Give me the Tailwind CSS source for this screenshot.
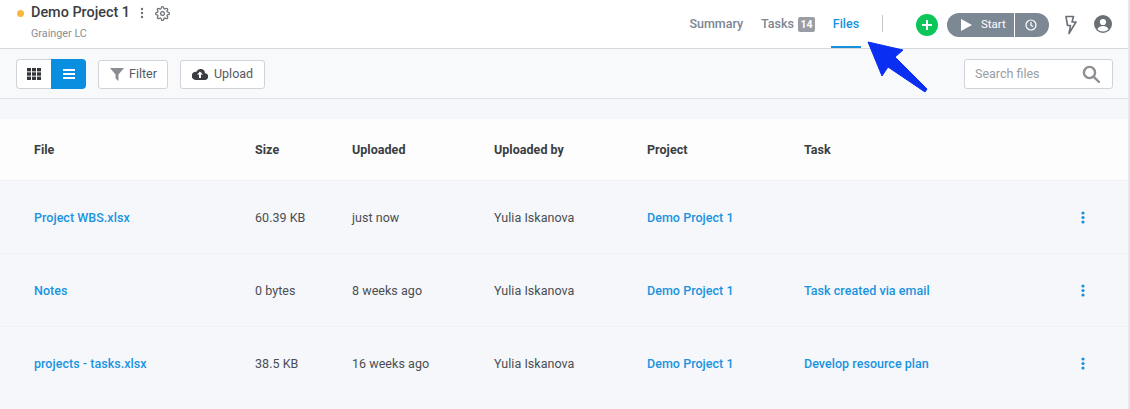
<!DOCTYPE html>
<html>
<head>
<meta charset="utf-8">
<script src="https://cdn.jsdelivr.net/npm/@tailwindcss/browser@4"></script>
</head>
<body class="font-['Roboto',sans-serif] bg-[#f5f7fa] overflow-hidden">
<div class="relative w-[1130px] h-[409px] overflow-hidden bg-[#f5f7fa] border-r-2 border-[#e6e6e8]">
  <header class="h-[49px] bg-white border-b border-[#d5d8de] flex justify-between pl-[17px] pr-[16px]">
    <div class="flex items-start">
      <span class="w-[7px] h-[7px] rounded-full bg-[#f9b83b] mt-[10px] mr-[7px]"></span>
      <div>
        <div class="flex items-center h-[26px]">
          <span class="text-[14.4px] font-medium text-[#3a3d42]">Demo Project 1</span>
          <svg class="ml-[10px]" width="4" height="12" viewBox="0 0 4 12" fill="#6b7077"><circle cx="2" cy="2" r="1.2"/><circle cx="2" cy="6" r="1.2"/><circle cx="2" cy="10" r="1.2"/></svg>
          <svg class="ml-[11px]" width="15" height="15" viewBox="0 0 24 24" fill="none" stroke="#6b7077" stroke-width="2"><circle cx="12" cy="12" r="3"/><path d="M19.4 15a1.65 1.65 0 0 0 .33 1.82l.06.06a2 2 0 1 1-2.83 2.83l-.06-.06a1.65 1.65 0 0 0-2.82 1.17V21a2 2 0 1 1-4 0v-.09A1.65 1.65 0 0 0 7.2 19.7l-.06.06a2 2 0 1 1-2.83-2.83l.06-.06a1.65 1.65 0 0 0-1.17-2.82H3a2 2 0 1 1 0-4h.09A1.65 1.65 0 0 0 4.3 7.2l-.06-.06a2 2 0 1 1 2.83-2.83l.06.06a1.65 1.65 0 0 0 2.82-1.17V3a2 2 0 1 1 4 0v.09a1.65 1.65 0 0 0 2.82 1.17l.06-.06a2 2 0 1 1 2.83 2.83l-.06.06a1.65 1.65 0 0 0 1.17 2.82H21a2 2 0 1 1 0 4h-.09A1.65 1.65 0 0 0 19.4 15z"/></svg>
        </div>
        <div class="text-[10.8px] leading-[14px] mt-[1px] text-[#8a8e94]">Grainger LC</div>
      </div>
    </div>
    <div class="flex items-start">
      <nav class="flex text-[12.5px] font-medium text-[#7c8591] h-[48px]">
        <span class="mt-[16px] leading-[16px]">Summary</span>
        <span class="ml-[18px] mt-[16px] leading-[16px] flex">Tasks<span class="ml-[4px] mt-[1px] w-[17px] h-[15px] rounded-[2px] bg-[#9a9da3] text-white text-[10.5px] font-bold leading-[15px] text-center">14</span></span>
        <span class="ml-[16px] w-[30px] h-[48px] border-b-[2px] border-[#1a8fdc] text-[#1a93e0] pt-[16px] leading-[16px] text-center">Files</span>
      </nav>
      <div class="w-px h-[17px] bg-[#c4c7cc] ml-[21px] mt-[15px]"></div>
      <div class="ml-[33px] mt-[14px] w-[22px] h-[22px] rounded-full bg-[#0cc65a] flex items-center justify-center">
        <svg width="10" height="10" viewBox="0 0 10 10" stroke="white" stroke-width="2"><path d="M5 0v10M0 5h10"/></svg>
      </div>
      <div class="ml-[9px] mt-[13px] flex h-[24px] text-white">
        <div class="w-[67px] rounded-l-full bg-[#7d8895] flex items-center pl-[14px] text-[11.5px]">
          <svg width="11" height="12" viewBox="0 0 11 12" fill="white"><path d="M0 0l11 6-11 6z"/></svg>
          <span class="ml-[9px]">Start</span>
        </div>
        <div class="ml-px w-[34px] rounded-r-full bg-[#7d8895] flex items-center pl-[10px]">
          <svg width="12" height="12" viewBox="0 0 12 12" fill="none" stroke="white" stroke-width="1.2"><circle cx="6" cy="6" r="5"/><path d="M6 3v3.3l2 1.2"/></svg>
        </div>
      </div>
      <svg class="ml-[15px] mt-[15px]" width="13" height="20" viewBox="0 0 13 20" fill="none" stroke="#6b7077" stroke-width="1.6" stroke-linejoin="round"><path d="M2 1.5h7.5L8 7h4L5 18.5l1.5-8H3.5z"/></svg>
      <svg class="ml-[17px] mt-[15px]" width="18" height="18" viewBox="0 0 18 18"><circle cx="9" cy="9" r="9" fill="#6b7077"/><circle cx="9" cy="7" r="3.1" fill="white"/><path d="M3.4 14.2c1-2.4 3.2-3.2 5.6-3.2s4.6.8 5.6 3.2A7.5 7.5 0 0 1 9 16.6a7.5 7.5 0 0 1-5.6-2.4z" fill="white"/></svg>
    </div>
  </header>

  <div class="h-[50px] bg-[#f8f9fb] border-b border-[#dcdfe4] pl-[16px] pr-[15px] flex items-center justify-between">
    <div class="flex items-center">
      <div class="flex h-[30px] w-[70px]">
        <div class="w-[35px] bg-white border border-[#d0d3d8] border-r-0 rounded-l-[4px] flex items-center justify-center">
          <svg width="14" height="12" viewBox="0 0 14 12" fill="#33363b"><rect width="4" height="3.4"/><rect x="5" width="4" height="3.4"/><rect x="10" width="4" height="3.4"/><rect y="4.3" width="4" height="3.4"/><rect x="5" y="4.3" width="4" height="3.4"/><rect x="10" y="4.3" width="4" height="3.4"/><rect y="8.6" width="4" height="3.4"/><rect x="5" y="8.6" width="4" height="3.4"/><rect x="10" y="8.6" width="4" height="3.4"/></svg>
        </div>
        <div class="w-[35px] bg-[#0a8fe0] rounded-r-[4px] flex items-center justify-center">
          <svg width="12" height="10" viewBox="0 0 12 10" fill="white"><rect width="12" height="2"/><rect y="4" width="12" height="2"/><rect y="8" width="12" height="2"/></svg>
        </div>
      </div>
      <div class="ml-[12px] w-[70px] h-[29px] mt-[1px] bg-white border border-[#d0d3d8] rounded-[3px] flex items-center pl-[11px] text-[12.5px] text-[#55595f]">
        <svg width="14" height="14" viewBox="0 0 14 14" fill="#8a8d92"><path d="M0 1h14L8.5 7.5V14L5.5 11.5v-4z"/></svg>
        <span class="ml-[5px]">Filter</span>
      </div>
      <div class="ml-[12px] w-[85px] h-[29px] mt-[1px] bg-white border border-[#d0d3d8] rounded-[3px] flex items-center pl-[11px] text-[12.5px] text-[#55595f]">
        <svg width="16" height="12" viewBox="0 0 16 12"><path d="M13 5.2A4.5 4.5 0 0 0 4.4 3.7 3.5 3.5 0 0 0 3.5 12H12.5a3.4 3.4 0 0 0 .5-6.8z" fill="#3a3d42"/><path d="M8 3.4L5 6.6h2V10h2V6.6h2z" fill="white"/></svg>
        <span class="ml-[6px]">Upload</span>
      </div>
    </div>
    <div class="w-[149px] h-[30px] bg-white border border-[#d0d3d8] rounded-[3px] flex items-center justify-between pl-[10px] pr-[12px]">
      <span class="text-[12.5px] text-[#9a9da3] pt-[2px]">Search files</span>
      <svg width="18" height="18" viewBox="0 0 18 18" fill="none" stroke="#8c8f94" stroke-width="2.4"><circle cx="7.5" cy="7.5" r="5.6"/><path d="M11.8 11.8L17 17" stroke-linecap="round"/></svg>
    </div>
  </div>

  <div class="mt-[20px] text-[12.5px] tracking-[0.04px]">
    <div class="h-[62px] pt-[2px] bg-[#fdfdfd] border-b border-[#f5f1f3] grid grid-cols-[221px_97px_142px_153px_157px_1fr] pl-[34px] items-center font-bold text-[#3a3d42]">
      <span>File</span><span>Size</span><span>Uploaded</span><span>Uploaded by</span><span>Project</span><span>Task</span>
    </div>
    <div class="h-[73px] pt-[2px] border-b border-[#f1f2f5] grid grid-cols-[221px_97px_142px_153px_157px_1fr] pl-[34px] pr-[43px] items-center text-[#4a4d52]">
      <span class="font-medium text-[#1a93e0]">Project WBS.xlsx</span><span>60.39 KB</span><span>just now</span><span>Yulia Iskanova</span><span class="font-medium text-[#1a93e0]">Demo Project 1</span>
      <div class="flex justify-end mb-[2px]"><svg width="4" height="13" viewBox="0 0 4 13" fill="#1a8fdc"><circle cx="2" cy="2" r="1.6"/><circle cx="2" cy="6.5" r="1.6"/><circle cx="2" cy="11" r="1.6"/></svg></div>
    </div>
    <div class="h-[73px] pt-[2px] border-b border-[#f1f2f5] grid grid-cols-[221px_97px_142px_153px_157px_1fr] pl-[34px] pr-[43px] items-center text-[#4a4d52]">
      <span class="font-medium text-[#1a93e0]">Notes</span><span>0 bytes</span><span>8 weeks ago</span><span>Yulia Iskanova</span><span class="font-medium text-[#1a93e0]">Demo Project 1</span>
      <div class="flex justify-between items-center"><span class="font-medium text-[#1a93e0]">Task created via email</span><svg class="mb-[2px]" width="4" height="13" viewBox="0 0 4 13" fill="#1a8fdc"><circle cx="2" cy="2" r="1.6"/><circle cx="2" cy="6.5" r="1.6"/><circle cx="2" cy="11" r="1.6"/></svg></div>
    </div>
    <div class="h-[73px] pt-[2px] grid grid-cols-[221px_97px_142px_153px_157px_1fr] pl-[34px] pr-[43px] items-center text-[#4a4d52]">
      <span class="font-medium text-[#1a93e0]">projects - tasks.xlsx</span><span>38.5 KB</span><span>16 weeks ago</span><span>Yulia Iskanova</span><span class="font-medium text-[#1a93e0]">Demo Project 1</span>
      <div class="flex justify-between items-center"><span class="font-medium text-[#1a93e0]">Develop resource plan</span><svg class="mb-[2px]" width="4" height="13" viewBox="0 0 4 13" fill="#1a8fdc"><circle cx="2" cy="2" r="1.6"/><circle cx="2" cy="6.5" r="1.6"/><circle cx="2" cy="11" r="1.6"/></svg></div>
    </div>
  </div>

  <svg class="absolute left-0 top-0 pointer-events-none" width="1130" height="100" viewBox="0 0 1130 100">
    <path d="M868 42L903 50L895 57L927 89L925 92L888 67L882 76Z" fill="#0a2ff0" stroke="#0a2ff0" stroke-width="1" stroke-linejoin="round"/>
  </svg>
</div>
</body>
</html>
